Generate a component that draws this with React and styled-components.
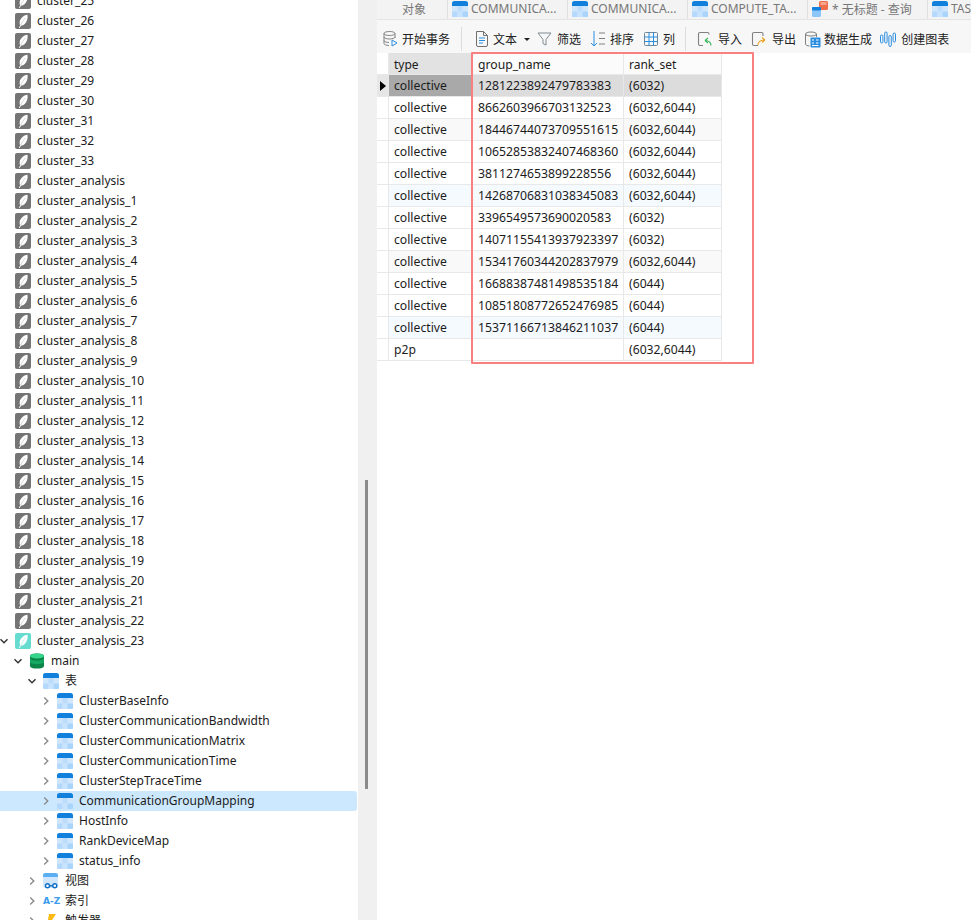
import React from "react";
import styled, { createGlobalStyle } from "styled-components";

const Global = createGlobalStyle`
  html, body { margin: 0; padding: 0; height: 920px; overflow: hidden; background: #fff; }
  #root { height: 920px; }
  * { box-sizing: border-box; }
`;
const Page = styled.div`
  display: flex; width: 971px; height: 920px; overflow: hidden;
  font-family: "Noto Sans", "Noto Sans CJK SC", sans-serif; font-size: 12px; color: #1c1c1c;
`;
const Side = styled.div`width: 358px; flex: none; height: 920px; overflow: hidden;`;
const Tree = styled.div`margin-top: -9px;`;
const Row = styled.div`
  height: 20px; display: flex; align-items: center; white-space: nowrap;
  padding-left: ${p => p.$level * 14}px;
  background: ${p => (p.$selected ? "#cce8ff" : "transparent")};
  border-radius: ${p => (p.$selected ? "0 3px 3px 0" : "0")};
  margin-right: 1px;
`;
const Arrow = styled.span`
  width: 15px; height: 20px; flex: none; display: flex; align-items: center; justify-content: flex-start;
  svg { flex: none; margin-left: -1px; }
`;
const IconSlot = styled.span`width: 16px; height: 16px; flex: none; display: block;`;
const Label = styled.span`margin-left: 6px; line-height: 20px;`;
const Gutter = styled.div`width: 19px; flex: none; height: 920px; background: #f0f0f0; padding: 480px 0 0 7px;`;
const Thumb = styled.div`width: 3px; height: 309px; background: #8a8a8a;`;
const Main = styled.div`flex: 1; min-width: 0; display: flex; flex-direction: column; height: 920px; overflow: hidden;`;
const Tabs = styled.div`height: 20px; flex: none; display: flex; background: #f3f3f3; border-bottom: 1px solid #e4e4e4; overflow: hidden;`;
const Tab = styled.div`
  width: ${p => p.$w}px; flex: none; height: 19px; display: flex; align-items: center; gap: 3px; padding: 0 0 2px 4px;
  color: #777; border-right: 1px solid #e0e0e0; white-space: nowrap; overflow: hidden; font-size: 12px;
  justify-content: ${p => (p.$center ? "center" : "flex-start")};
  svg { flex: none; }
`;
const Toolbar = styled.div`height: 33px; flex: none; display: flex; align-items: center; background: #f7f7f7; padding: 5px 0 0 5px;`;
const Tool = styled.div`display: flex; align-items: center; gap: ${p => p.$gap ?? 5}px; margin-right: ${p => p.$mr ?? 9}px; white-space: nowrap; color: #222; font-size: 12px; svg { flex: none; }`;
const Sep = styled.div`width: 1px; height: 24px; background: #dcdcdc; margin: 0 ${p => p.$r}px 0 ${p => p.$l}px;`;
const Caret = styled.span`width: 0; height: 0; border-left: 3px solid transparent; border-right: 3px solid transparent; border-top: 3px solid #222; margin-left: 4px;`;
const GridWrap = styled.div`position: relative; flex: 1;`;
const Grid = styled.div`display: grid; grid-template-columns: 12px 83px 152px 98px; width: 345px;`;
const Cell = styled.div`
  height: 22px; padding: ${p => (p.$head ? "1px" : "0")} 0 0 ${p => (p.$mark ? 0 : p.$pad ?? 5)}px; white-space: nowrap; overflow: hidden;
  background: ${p => p.$bg}; border-right: 1px solid #e8e8e8; border-bottom: 1px solid #e8e8e8;
  display: flex; align-items: center;
  font-size: ${p => p.$size ?? 12}px;
`;
const Marker = styled.span`width: 0; height: 0; border-top: 5px solid transparent; border-bottom: 5px solid transparent; border-left: 6px solid #000; margin-left: 3px;`;
const Highlight = styled.div`position: absolute; left: 94px; top: -1px; width: 283px; height: 312px; border: 2px solid #f88080; border-radius: 1px; pointer-events: none;`;

const Chevron = ({ open, color = "#7a7a7a" }) => (
  <svg width="10" height="10" viewBox="0 0 10 10" fill="none" stroke={color} strokeWidth="1.4">
    <path d={open ? "M1.500 3.200 5 6.800 8.500 3.200" : "M3.200 1.500 6.800 5 3.200 8.500"} />
  </svg>
);
const Feather = ({ active }) => (
  <svg width="16" height="16" viewBox="0 0 16 16">
    <rect width="16" height="16" rx="2" fill={active ? "#66dcd0" : "#747474"} />
    <path d="M12.400 1.800C8.600 2.300 5.300 5.300 4.700 9c-.2 1.300 0 2.400.4 3.200L4 14.800l.8.300 1.100-2.300c2.800-.3 4.800-2.200 5.800-4.700.9-2.100 1.200-4.200.7-6.300z" fill="#fff" />
    <path d="M5.500 12.500C6.800 9.500 8.500 7 10.500 5" fill="none" stroke={active ? "#9be9e0" : "#b5b5b5"} strokeWidth=".6" />
  </svg>
);
const Db = () => (
  <svg width="16" height="16" viewBox="0 0 16 16">
    <path d="M1 3c0-1.700 3-2.600 7-2.600s7 .9 7 2.600v10c0 1.700-3 2.600-7 2.600S1 14.700 1 13z" fill="#0c8549" />
    <ellipse cx="8" cy="3" rx="7" ry="2.600" fill="#33d68a" />
    <path d="M1 5.500c1 1.500 3.500 2.200 7 2.200s6-.7 7-2.200v3.600c-1 1.500-3.500 2.200-7 2.200s-6-.7-7-2.200z" fill="#14a862" />
  </svg>
);
const TableIcon = ({ size = 16 }) => (
  <svg width={size} height={size} viewBox="0 0 16 16">
    <rect width="16" height="16" rx="2.500" fill="#cfe6fd" />
    <path d="M2.500 0h11A2.500 2.500 0 0 1 16 2.500V5H0V2.500A2.500 2.500 0 0 1 2.500 0z" fill="#1080dc" />
    <rect x="5.500" y="5" width="5" height="5.500" fill="#bcdcfc" />
    <rect x="0" y="10.500" width="5.500" height="5.500" rx="1" fill="#b4d9fc" />
    <rect x="5.500" y="10.500" width="5" height="5.500" fill="#c8e3fd" />
    <rect x="10.500" y="10.500" width="5.500" height="5.500" rx="1" fill="#a9d4fc" />
  </svg>
);
const ViewIcon = () => (
  <svg width="16" height="16" viewBox="0 0 16 16">
    <rect width="15" height="15" rx="2.500" fill="#cfe6fd" />
    <path d="M2.500 0h10A2.500 2.500 0 0 1 15 2.500V4H0V2.500A2.500 2.500 0 0 1 2.500 0z" fill="#5aaef2" />
    <g fill="#fff" stroke="#0f6fc4" strokeWidth="1.400">
      <circle cx="4.500" cy="12.800" r="2" /><circle cx="11.800" cy="12.800" r="2" />
    </g>
    <path d="M6.500 12.800h3.300" stroke="#0f6fc4" strokeWidth="1.400" />
  </svg>
);
const AZ = styled.span`width: 16px; font: 700 9px/16px "DejaVu Sans", sans-serif; color: #3a9cec; white-space: nowrap; letter-spacing: 0; display: block;`;
const Bolt = () => (
  <svg width="16" height="16" viewBox="0 0 16 16"><path d="M6 1h7l-4 6H5z" fill="#fdb913" /></svg>
);

const Begin = () => (
  <svg width="18" height="18" viewBox="0 0 18 18" fill="none" stroke="#808080" strokeWidth="1">
    <ellipse cx="7.500" cy="3.500" rx="5.500" ry="2" />
    <path d="M2 3.500v10c0 1.100 2.500 2 5 2M13 3.500V8M2 7c0 1.100 2.500 2 5.500 2S13 8.100 13 7M2 10.500c0 1.100 2.500 2 5 2" />
    <path d="M10 10l5 3-5 3z" stroke="#2a8ee0" />
  </svg>
);
const Doc = () => (
  <svg width="16" height="18" viewBox="0 0 16 18" fill="none" stroke="#707070" strokeWidth="1">
    <path d="M2.500 1.500h7l4 4v9.500a1.500 1.500 0 0 1-1.500 1.500h-8a1.500 1.500 0 0 1-1.500-1.500z" /><path d="M9.500 1.500v4h4" />
    <path d="M5 8h6M5 10.500h6M5 13h4" stroke="#2a8ee0" />
  </svg>
);
const Funnel = () => (
  <svg width="15" height="16" viewBox="0 0 15 16" fill="none" stroke="#7f8a90" strokeWidth="1">
    <path d="M1 2h13L9 8.500V14l-3-1.500v-4z" />
  </svg>
);
const Sort = () => (
  <svg width="16" height="18" viewBox="0 0 16 18" fill="none" strokeWidth="1">
    <path d="M4 1v15M1 13l3 3 3-3" stroke="#2a8ee0" /><path d="M9 3h6M9 8.500h6M9 14h6" stroke="#808080" />
  </svg>
);
const Cols = () => (
  <svg width="16" height="16" viewBox="0 0 16 16" fill="none" stroke="#2a8ee0" strokeWidth="1">
    <rect x="1.500" y="1.500" width="13" height="13" rx="1" stroke="#6f8796" /><path d="M6 1.500v13M10.500 1.500v13M1.500 6h13M1.500 10.500h13" />
  </svg>
);
const Import = () => (
  <svg width="16" height="16" viewBox="0 0 16 16" fill="none" strokeWidth="1.100">
    <path d="M12 3.500V3a1.500 1.500 0 0 0-1.500-1.500H3A1.500 1.500 0 0 0 1.500 3v10A1.500 1.500 0 0 0 3 14.500h3" stroke="#808080" />
    <path d="M14 14.500c0-3-2-5-6-5M8 9.500l3-2.500M8 9.500l3 2.500" stroke="#35b558" />
  </svg>
);
const Export = () => (
  <svg width="16" height="16" viewBox="0 0 16 16" fill="none" strokeWidth="1.100">
    <path d="M12 5V3a1.500 1.500 0 0 0-1.500-1.500H3A1.500 1.500 0 0 0 1.500 3v10A1.500 1.500 0 0 0 3 14.500h4" stroke="#808080" />
    <path d="M7 14c0-3 2-5 7-5M14 9l-3-2.500M14 9l-3 2.500" stroke="#f0a020" />
  </svg>
);
const DataGen = () => (
  <svg width="17" height="17" viewBox="0 0 17 17" fill="none">
    <ellipse cx="7" cy="3" rx="5.500" ry="2" stroke="#808080" />
    <path d="M1.500 3v10c0 1.100 2 2 4 2M12.500 3v3" stroke="#808080" />
    <rect x="6.500" y="6.500" width="10" height="10" rx="1" fill="#2a8ee0" />
    <path d="M8 9h2M12 9h2.500M8 12h2M12 12h2.500M8 14.500h6.500" stroke="#fff" />
  </svg>
);
const Chart = () => (
  <svg width="16" height="16" viewBox="0 0 16 16" fill="none" stroke="#2a8ee0" strokeWidth="1">
    <rect x=".5" y="4" width="2.400" height="8" rx="1.200" /><rect x="4.700" y="1" width="2.400" height="11" rx="1.200" />
    <rect x="8.900" y="4.500" width="2.400" height="11" rx="1.200" /><rect x="13.100" y="2" width="2.400" height="9" rx="1.200" />
  </svg>
);
const QueryIcon = () => (
  <svg width="17" height="16" viewBox="0 0 17 16">
    <rect x="7" y="0" width="9" height="9" rx="1.500" fill="#ef6d4a" />
    <path d="M8.500 1h6v3h-6z" fill="#f9a58c" />
    <rect x="0" y="6" width="9" height="10" rx="1.500" fill="#8cc6f8" />
    <rect x="0" y="6" width="9" height="3.500" rx="1" fill="#1080dc" />
  </svg>
);

const trees = [];
for (let i = 25; i <= 33; i++) trees.push(`cluster_${i}`);
trees.push("cluster_analysis");
for (let i = 1; i <= 22; i++) trees.push(`cluster_analysis_${i}`);
const tables = ["ClusterBaseInfo", "ClusterCommunicationBandwidth", "ClusterCommunicationMatrix", "ClusterCommunicationTime", "ClusterStepTraceTime", "CommunicationGroupMapping", "HostInfo", "RankDeviceMap", "status_info"];

const rows = [
  ["collective", "1281223892479783383", "(6032)"],
  ["collective", "8662603966703132523", "(6032,6044)"],
  ["collective", "18446744073709551615", "(6032,6044)"],
  ["collective", "10652853832407468360", "(6032,6044)"],
  ["collective", "3811274653899228556", "(6032,6044)"],
  ["collective", "14268706831038345083", "(6032,6044)"],
  ["collective", "3396549573690020583", "(6032)"],
  ["collective", "14071155413937923397", "(6032)"],
  ["collective", "15341760344202837979", "(6032,6044)"],
  ["collective", "16688387481498535184", "(6044)"],
  ["collective", "10851808772652476985", "(6044)"],
  ["collective", "15371166713846211037", "(6044)"],
  ["p2p", "", "(6032,6044)"],
];
const rowBg = i => (i === 0 ? "#dcdcdc" : i === 5 || i === 11 ? "#f5faff" : i === 2 || i === 8 ? "#f9f9f9" : "#fff");

const TreeRow = ({ level, open, arrow = true, icon, text, selected }) => (
  <Row $level={level} $selected={selected}>
    <Arrow>{arrow && <Chevron open={open} color={open ? "#333" : "#8a8a8a"} />}</Arrow>
    <IconSlot>{icon}</IconSlot>
    <Label>{text}</Label>
  </Row>
);

export default function App() {
  return (
    <Page>
      <Global />
      <Side>
        <Tree>
          {trees.map(t => <TreeRow key={t} level={0} arrow={false} icon={<Feather />} text={t} />)}
          <TreeRow level={0} open icon={<Feather active />} text="cluster_analysis_23" />
          <TreeRow level={1} open icon={<Db />} text="main" />
          <TreeRow level={2} open icon={<TableIcon />} text="表" />
          {tables.map(t => <TreeRow key={t} level={3} icon={<TableIcon />} text={t} selected={t === "CommunicationGroupMapping"} />)}
          <TreeRow level={2} icon={<ViewIcon />} text="视图" />
          <TreeRow level={2} icon={<AZ>A-Z</AZ>} text="索引" />
          <TreeRow level={2} icon={<Bolt />} text="触发器" />
        </Tree>
      </Side>
      <Gutter><Thumb /></Gutter>
      <Main>
        <Tabs>
          <Tab $w={71} $center>对象</Tab>
          <Tab $w={120}><TableIcon />COMMUNICA...</Tab>
          <Tab $w={120}><TableIcon />COMMUNICA...</Tab>
          <Tab $w={120}><TableIcon />COMPUTE_TA...</Tab>
          <Tab $w={120}><QueryIcon />* 无标题 - 查询</Tab>
          <Tab $w={60}><TableIcon />TAS</Tab>
        </Tabs>
        <Toolbar>
          <Tool $gap={2} $mr={0}><Begin />开始事务</Tool>
          <Sep $l={11} $r={12} />
          <Tool $gap={3} $mr={7}><Doc />文本<Caret /></Tool>
          <Tool><Funnel />筛选</Tool>
          <Tool $gap={4}><Sort />排序</Tool>
          <Tool $gap={4} $mr={0}><Cols />列</Tool>
          <Sep $l={10} $r={11} />
          <Tool><Import />导入</Tool>
          <Tool $mr={8}><Export />导出</Tool>
          <Tool $gap={3} $mr={8}><DataGen />数据生成</Tool>
          <Tool $mr={0}><Chart />创建图表</Tool>
        </Toolbar>
        <GridWrap>
          <Grid>
            <Cell $mark $bg="#fff" />
            <Cell $head $bg="#e2e2e2">type</Cell>
            <Cell $head $pad={6} $size={12.2} $bg="#fbfbfb">group_name</Cell>
            <Cell $head $bg="#fbfbfb">rank_set</Cell>
            {rows.map((r, i) => (
              <React.Fragment key={i}>
                <Cell $mark $bg={i === 0 ? "#e6e6e6" : "#fff"}>{i === 0 && <Marker />}</Cell>
                <Cell $size={12.2} $bg={i === 0 ? "#a9a9a9" : rowBg(i)}>{r[0]}</Cell>
                <Cell $pad={6} $size={12.25} $bg={rowBg(i)}>{r[1]}</Cell>
                <Cell $size={12.2} $bg={rowBg(i)}>{r[2]}</Cell>
              </React.Fragment>
            ))}
          </Grid>
          <Highlight />
        </GridWrap>
      </Main>
    </Page>
  );
}
